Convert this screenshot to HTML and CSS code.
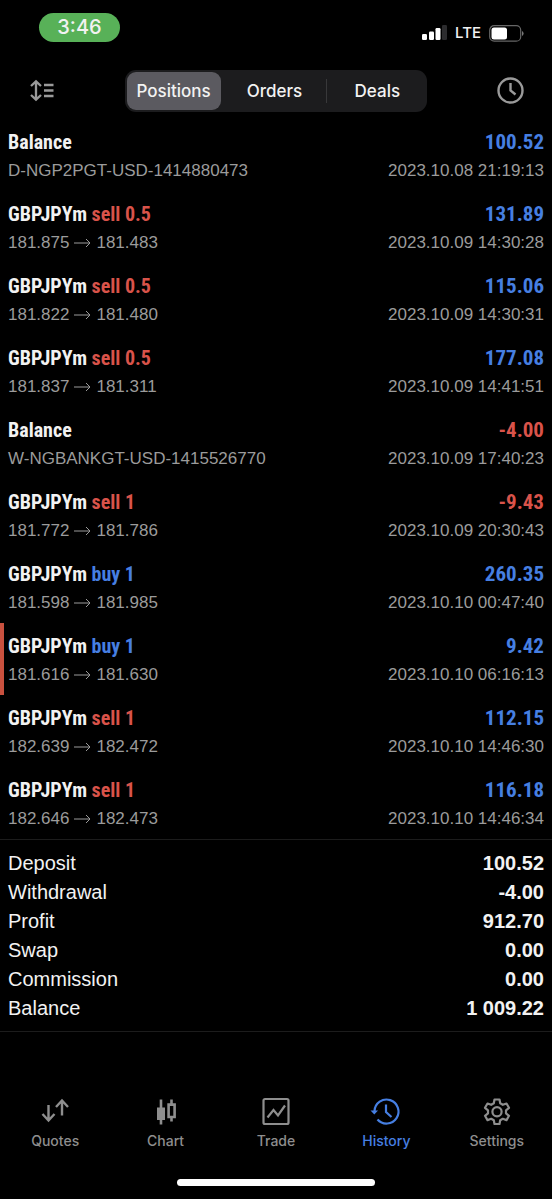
FILE: index.html
```html
<!DOCTYPE html>
<html lang="en">
<head>
    <meta charset="UTF-8">
    <meta name="viewport" content="width=device-width, initial-scale=1">
    <title>History</title>
    <link rel="stylesheet" href="styles.css">
</head>
<body>
    <!-- Status bar -->
    <div class="status">
        <span class="time">3:46</span>
        <div class="status-right">
            <svg width="25" height="16" viewBox="0 0 25 16" fill="#fff">
                <rect x="0" y="9" width="5" height="6" rx="1.2" />
                <rect x="7" y="6.500" width="5" height="8.500" rx="1.2" />
                <rect x="13.500" y="3" width="5" height="12" rx="1.2" />
                <rect x="20" y="0" width="5" height="15" rx="1.2" fill="#2c2c2e" />
            </svg>
            <span class="network">LTE</span>
            <svg width="35" height="17" viewBox="0 0 35 17">
                <rect x="0.700" y="0.700" width="31" height="15.500" rx="4.500" fill="none" stroke="#666" stroke-width="1.200" />
                <rect x="2.500" y="2.500" width="15.500" height="12" rx="2.500" fill="#fff" />
                <path d="M33 6v5q1.600-.800 1.600-2.500T33 6z" fill="#777" />
            </svg>
        </div>
    </div>

    <!-- Header -->
    <header class="header">
        <button type="button" class="icon-button" aria-label="Sort">
            <svg width="26" height="22" viewBox="0 0 26 22" fill="none" stroke="#9a9a9a" stroke-width="2.300">
                <path d="M7 2v17M2 6 7 1.300 12 6M2 15 7 19.700 12 15" />
                <path d="M15 5h9.500M15 10.500h9.500M15 16h9.500" />
            </svg>
        </button>
        <div class="segments">
            <button type="button" class="segment active">Positions</button>
            <button type="button" class="segment">Orders</button>
            <button type="button" class="segment divided">Deals</button>
        </div>
        <button type="button" class="icon-button" aria-label="Period">
            <svg width="28" height="28" viewBox="0 0 28 28" fill="none" stroke="#9a9a9a" stroke-width="2.400">
                <circle cx="13.500" cy="13.500" r="12" />
                <path d="M13.500 6v7.500l5 4" />
            </svg>
        </button>
    </header>

    <!-- Positions -->
    <main>
        <ul class="deals">
            <li class="deal">
                <div class="line"><b>Balance</b><b class="value blue">100.52</b></div>
                <div class="line sub"><span>D-NGP2PGT-USD-1414880473</span><span>2023.10.08 21:19:13</span></div>
            </li>
            <li class="deal">
                <div class="line"><b>GBPJPYm <span class="red">sell 0.5</span></b><b class="value blue">131.89</b></div>
                <div class="line sub"><span class="prices">181.875 <svg class="arrow" viewBox="0 0 17 10"><path d="M0 5h16M12 1l4 4-4 4" /></svg> 181.483</span><span>2023.10.09 14:30:28</span></div>
            </li>
            <li class="deal">
                <div class="line"><b>GBPJPYm <span class="red">sell 0.5</span></b><b class="value blue">115.06</b></div>
                <div class="line sub"><span class="prices">181.822 <svg class="arrow" viewBox="0 0 17 10"><path d="M0 5h16M12 1l4 4-4 4" /></svg> 181.480</span><span>2023.10.09 14:30:31</span></div>
            </li>
            <li class="deal">
                <div class="line"><b>GBPJPYm <span class="red">sell 0.5</span></b><b class="value blue">177.08</b></div>
                <div class="line sub"><span class="prices">181.837 <svg class="arrow" viewBox="0 0 17 10"><path d="M0 5h16M12 1l4 4-4 4" /></svg> 181.311</span><span>2023.10.09 14:41:51</span></div>
            </li>
            <li class="deal">
                <div class="line"><b>Balance</b><b class="value red">-4.00</b></div>
                <div class="line sub"><span>W-NGBANKGT-USD-1415526770</span><span>2023.10.09 17:40:23</span></div>
            </li>
            <li class="deal">
                <div class="line"><b>GBPJPYm <span class="red">sell 1</span></b><b class="value red">-9.43</b></div>
                <div class="line sub"><span class="prices">181.772 <svg class="arrow" viewBox="0 0 17 10"><path d="M0 5h16M12 1l4 4-4 4" /></svg> 181.786</span><span>2023.10.09 20:30:43</span></div>
            </li>
            <li class="deal">
                <div class="line"><b>GBPJPYm <span class="blue">buy 1</span></b><b class="value blue">260.35</b></div>
                <div class="line sub"><span class="prices">181.598 <svg class="arrow" viewBox="0 0 17 10"><path d="M0 5h16M12 1l4 4-4 4" /></svg> 181.985</span><span>2023.10.10 00:47:40</span></div>
            </li>
            <li class="deal marked">
                <div class="line"><b>GBPJPYm <span class="blue">buy 1</span></b><b class="value blue">9.42</b></div>
                <div class="line sub"><span class="prices">181.616 <svg class="arrow" viewBox="0 0 17 10"><path d="M0 5h16M12 1l4 4-4 4" /></svg> 181.630</span><span>2023.10.10 06:16:13</span></div>
            </li>
            <li class="deal">
                <div class="line"><b>GBPJPYm <span class="red">sell 1</span></b><b class="value blue">112.15</b></div>
                <div class="line sub"><span class="prices">182.639 <svg class="arrow" viewBox="0 0 17 10"><path d="M0 5h16M12 1l4 4-4 4" /></svg> 182.472</span><span>2023.10.10 14:46:30</span></div>
            </li>
            <li class="deal">
                <div class="line"><b>GBPJPYm <span class="red">sell 1</span></b><b class="value blue">116.18</b></div>
                <div class="line sub"><span class="prices">182.646 <svg class="arrow" viewBox="0 0 17 10"><path d="M0 5h16M12 1l4 4-4 4" /></svg> 182.473</span><span>2023.10.10 14:46:34</span></div>
            </li>
        </ul>

        <!-- Totals -->
        <div class="totals">
            <table>
                <tr><th scope="row">Deposit</th><td>100.52</td></tr>
                <tr><th scope="row">Withdrawal</th><td>-4.00</td></tr>
                <tr><th scope="row">Profit</th><td>912.70</td></tr>
                <tr><th scope="row">Swap</th><td>0.00</td></tr>
                <tr><th scope="row">Commission</th><td>0.00</td></tr>
                <tr><th scope="row">Balance</th><td>1 009.22</td></tr>
            </table>
        </div>
    </main>

    <!-- Tab bar -->
    <nav class="tabs">
        <a href="#quotes" class="tab">
            <svg width="28" height="28" viewBox="0 0 28 28" fill="none" stroke="currentColor" stroke-width="2.400">
                <path d="M7.500 8v15M1.500 17l6 6.500 6-6.500" />
                <path d="M21 18.500V3.500M15 10l6-6.500 6 6.500" />
            </svg>
            Quotes
        </a>
        <a href="#chart" class="tab">
            <svg width="28" height="28" viewBox="0 0 28 28" fill="none" stroke="currentColor" stroke-width="2.600">
                <path d="M9 2.500v25M19.500 2.500V7M19.500 20v4.500" />
                <path d="M5 10.500h8V23H5z" fill="currentColor" stroke="none" />
                <path d="M16.600 7.600h6V20h-6z" />
            </svg>
            Chart
        </a>
        <a href="#trade" class="tab">
            <svg width="28" height="28" viewBox="0 0 28 28" fill="none" stroke="currentColor" stroke-width="2.200">
                <rect x="1.500" y="2" width="25" height="25" rx="1.500" />
                <path d="M5.500 20.500 11.500 13l4.500 5.500L23 8.500" />
            </svg>
            Trade
        </a>
        <a href="#history" class="tab current">
            <svg width="28" height="28" viewBox="0 0 28 28" fill="none" stroke="currentColor" stroke-width="2.200">
                <path d="M2.500 14A12 12 0 1 1 5.500 22.500" />
                <path d="M-1.500 13.500h7.500L2.300 17.500z" fill="currentColor" stroke="none" />
                <path d="M14 7.500V15l5.500 5" />
            </svg>
            History
        </a>
        <a href="#settings" class="tab">
            <svg width="28" height="28" viewBox="0 0 28 28" fill="none" stroke="currentColor" stroke-width="2.200" stroke-linejoin="round">
                <path d="M11.500 2.500h5l.700 3.800 2.600 1.500 3.700-1.300 2.500 4.300-3 2.500v3l3 2.500-2.500 4.300-3.700-1.300-2.600 1.500-.700 3.700h-5l-.700-3.700-2.600-1.500-3.700 1.300L2 18.800l3-2.500v-3l-3-2.500 2.500-4.300 3.700 1.300 2.600-1.500z" />
                <circle cx="14" cy="14.800" r="4.600" />
            </svg>
            Settings
        </a>
    </nav>
    <div class="home-bar"></div>
</body>
</html>
```

FILE: styles.css
```css
* {
    box-sizing: border-box;
}

body {
    margin: 0;
    min-height: 100vh;
    display: flex;
    flex-direction: column;
    background-color: #000;
    color: #f2f2f2;
    font-family: "Liberation Sans", Arial, sans-serif;
}

main {
    flex: 1;
}

svg {
    display: block;
    overflow: visible;
}

button {
    padding: 0;
    border: none;
    background: none;
    color: inherit;
    cursor: pointer;
}

.red {
    color: #d9534a;
}

.blue {
    color: #467fe2;
}

/* Status bar */
.status {
    display: flex;
    justify-content: space-between;
    align-items: flex-start;
    padding: 13px 28px 0 39px;
    font-family: Inter, sans-serif;
}

.time {
    width: 81px;
    border-radius: 15px;
    background-color: #58b158;
    font-size: 20px;
    font-weight: 500;
    line-height: 29px;
    text-align: center;
}

.status-right {
    display: flex;
    align-items: center;
    gap: 8px;
    padding-top: 10px;
}

.network {
    font-size: 15px;
    font-weight: 500;
    line-height: 20px;
}

/* Header */
.header {
    display: flex;
    justify-content: space-between;
    align-items: center;
    padding: 27px 27px 7px 29px;
}

.icon-button {
    display: flex;
}

.segments {
    display: grid;
    grid-template-columns: repeat(3, 1fr);
    width: 61%;
    height: 42px;
    border-radius: 11px;
    background-color: #1c1c1e;
}

.segment {
    margin: 2px 5px 2px 2px;
    border-radius: 9px;
    font-family: Inter, sans-serif;
    font-size: 17px;
    font-weight: 500;
}

.segment.active {
    background-color: #5b5a60;
}

.segment.divided {
    margin: 9px 0;
    border-left: 1px solid #38383a;
    border-radius: 0;
}

/* Positions */
.deals {
    margin: 0;
    padding: 0;
    list-style: none;
}

.deal {
    padding: 9px 8px 5px;
}

.deal.marked {
    padding-left: 4px;
    border-left: 4px solid #c9513f;
}

.line {
    display: flex;
    justify-content: space-between;
    font-family: "Roboto Condensed", "Liberation Sans Narrow", sans-serif;
    font-size: 20px;
    line-height: 28px;
}

.value {
    font-size: 21px;
}

.line.sub {
    color: #9b9b9b;
    font-family: "Liberation Sans", Arial, sans-serif;
    font-size: 17px;
    line-height: 30px;
}

.prices {
    display: flex;
    align-items: center;
    gap: 5px;
}

.arrow {
    width: 17px;
    height: 10px;
    fill: none;
    stroke: currentColor;
}

/* Totals */
.totals {
    padding: 9px 8px 8px;
    border-top: 1px solid #1c1c1c;
    border-bottom: 1px solid #1c1c1c;
}

.totals table {
    width: 100%;
    border-collapse: collapse;
    font-size: 20px;
    line-height: 29px;
}

.totals th {
    padding: 0;
    font-weight: normal;
    text-align: left;
}

.totals td {
    padding: 0;
    font-weight: bold;
    text-align: right;
}

/* Tab bar */
.tabs {
    display: grid;
    grid-template-columns: repeat(5, 1fr);
}

.tab {
    display: flex;
    flex-direction: column;
    align-items: center;
    gap: 7px;
    color: #8e8e8e;
    font-family: Inter, sans-serif;
    font-size: 14px;
    font-weight: 500;
    line-height: 18px;
    text-decoration: none;
}

.tab.current {
    color: #467fe2;
}

.home-bar {
    width: 36%;
    height: 7px;
    margin: 29px auto 13px;
    border-radius: 4px;
    background-color: #fff;
}
```
